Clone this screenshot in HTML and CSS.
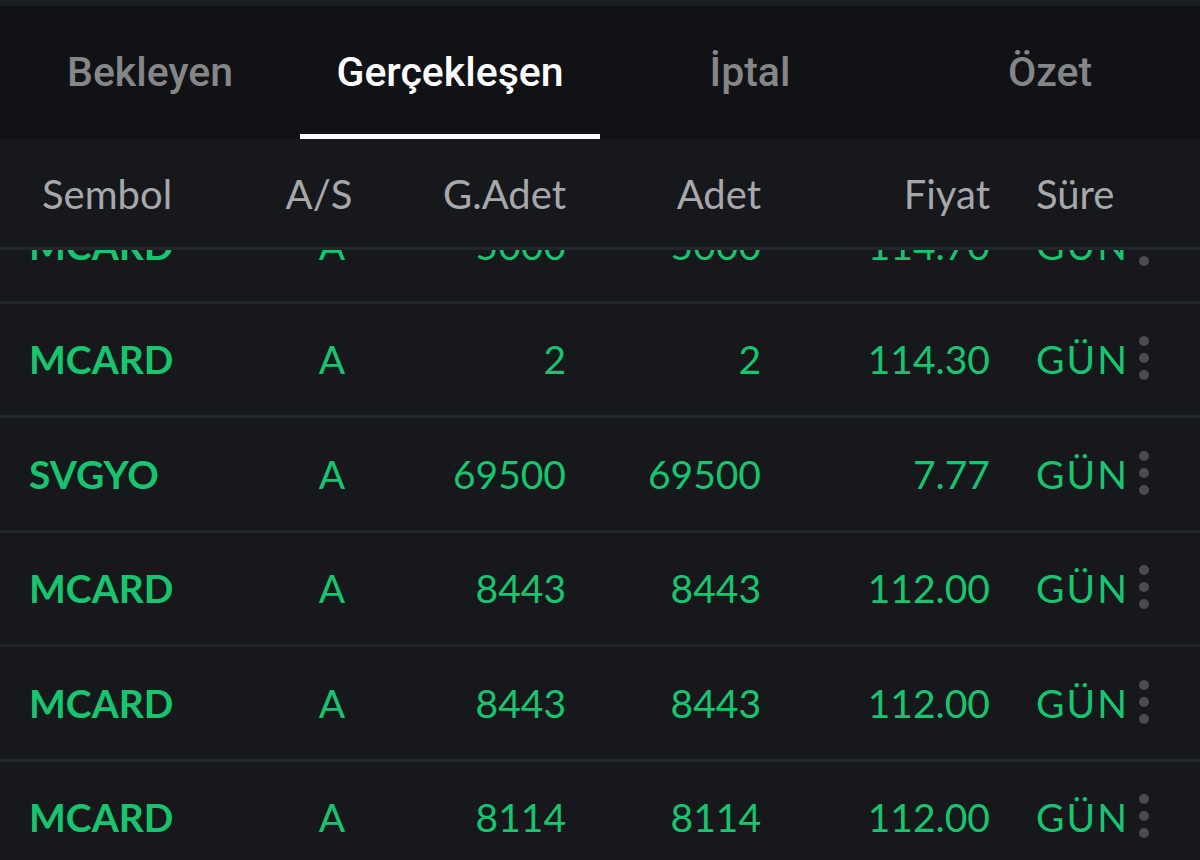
FILE: index.html
```html
<!DOCTYPE html>
<html lang="tr">
<head>
<meta charset="utf-8">
<title>Emirler</title>
<link rel="stylesheet" href="styles.css">
</head>
<body>
<div class="app">
  <div class="status-strip"></div>
  <nav class="tabs">
    <div class="tab">Bekleyen</div>
    <div class="tab active">Gerçekleşen</div>
    <div class="tab">İptal</div>
    <div class="tab">Özet</div>
  </nav>
  <div class="thead row-grid">
    <div class="c-sym">Sembol</div>
    <div class="c-as">A/S</div>
    <div class="c-num">G.Adet</div>
    <div class="c-num">Adet</div>
    <div class="c-num">Fiyat</div>
    <div class="c-sure">Süre</div>
    <div class="c-more"></div>
  </div>
  <div class="list-viewport">
    <div class="list">
      <div class="row row-grid">
        <div class="c-sym">MCARD</div><div class="c-as">A</div><div class="c-num">5000</div><div class="c-num">5000</div><div class="c-num">114.70</div><div class="c-sure">GÜN</div>
        <div class="c-more"><span class="dots"><i></i><i></i><i></i></span></div>
      </div>
      <div class="row row-grid">
        <div class="c-sym">MCARD</div><div class="c-as">A</div><div class="c-num">2</div><div class="c-num">2</div><div class="c-num">114.30</div><div class="c-sure">GÜN</div>
        <div class="c-more"><span class="dots"><i></i><i></i><i></i></span></div>
      </div>
      <div class="row row-grid">
        <div class="c-sym">SVGYO</div><div class="c-as">A</div><div class="c-num">69500</div><div class="c-num">69500</div><div class="c-num">7.77</div><div class="c-sure">GÜN</div>
        <div class="c-more"><span class="dots"><i></i><i></i><i></i></span></div>
      </div>
      <div class="row row-grid">
        <div class="c-sym">MCARD</div><div class="c-as">A</div><div class="c-num">8443</div><div class="c-num">8443</div><div class="c-num">112.00</div><div class="c-sure">GÜN</div>
        <div class="c-more"><span class="dots"><i></i><i></i><i></i></span></div>
      </div>
      <div class="row row-grid">
        <div class="c-sym">MCARD</div><div class="c-as">A</div><div class="c-num">8443</div><div class="c-num">8443</div><div class="c-num">112.00</div><div class="c-sure">GÜN</div>
        <div class="c-more"><span class="dots"><i></i><i></i><i></i></span></div>
      </div>
      <div class="row row-grid">
        <div class="c-sym">MCARD</div><div class="c-as">A</div><div class="c-num">8114</div><div class="c-num">8114</div><div class="c-num">112.00</div><div class="c-sure">GÜN</div>
        <div class="c-more"><span class="dots"><i></i><i></i><i></i></span></div>
      </div>
    </div>
  </div>
</div>
</body>
</html>
```

FILE: styles.css
```css
* { box-sizing: border-box; }
html, body {
  margin: 0;
  padding: 0;
  background: #16181c;
  width: 1200px;
  height: 860px;
  overflow: hidden;
}
.app {
  display: flex;
  flex-direction: column;
  height: 860px;
  font-family: Lato, "Noto Sans", sans-serif;
}
.status-strip {
  height: 6px;
  background: #1b1e23;
  flex: none;
}
.tabs {
  display: grid;
  grid-template-columns: repeat(4, 1fr);
  height: 133px;
  background: #111216;
  flex: none;
}
.tab {
  display: flex;
  align-items: center;
  justify-content: center;
  font-family: Roboto, "Noto Sans", sans-serif;
  font-weight: 500;
  font-size: 41px;
  color: #858688;
  border-bottom: 5px solid transparent;
  padding-top: 3px;
}
.tab.active {
  color: #ffffff;
  border-bottom-color: #ffffff;
}
.row-grid {
  display: grid;
  grid-template-columns: 240px 120px 176px 195px 229px 140px 28px;
  padding-left: 30px;
  align-items: center;
}
.thead {
  height: 111px;
  flex: none;
  color: #a6a8ab;
  font-size: 40px;
  font-weight: 400;
  border-bottom: 3px solid #22252a;
  background: #16181c;
  position: relative;
  z-index: 1;
  padding-top: 2px;
}
.thead .c-sym { padding-left: 12px; }
.thead .c-as { padding-right: 22px; }
.c-sym { text-align: left; }
.c-as { text-align: center; }
.c-num { text-align: right; }
.c-sure { text-align: left; padding-left: 46px; }
.c-more { display: flex; justify-content: center; }
.list-viewport {
  flex: 1;
  overflow: hidden;
}
.list {
  margin-top: -61px;
}
.row {
  height: 114.5px;
  border-bottom: 3px solid #22252a;
  color: #18c56f;
  font-size: 39px;
  font-weight: 400;
}
.row .c-sym {
  font-weight: 700;
  margin-left: -1px;
}
.row .c-as { padding-left: 4px; }
.row .c-sure { letter-spacing: 2px; }
.dots {
  display: flex;
  flex-direction: column;
  gap: 7px;
  margin-top: -2px;
}
.dots i {
  display: block;
  width: 10px;
  height: 10px;
  border-radius: 50%;
  background: #4b4c4f;
}
```
